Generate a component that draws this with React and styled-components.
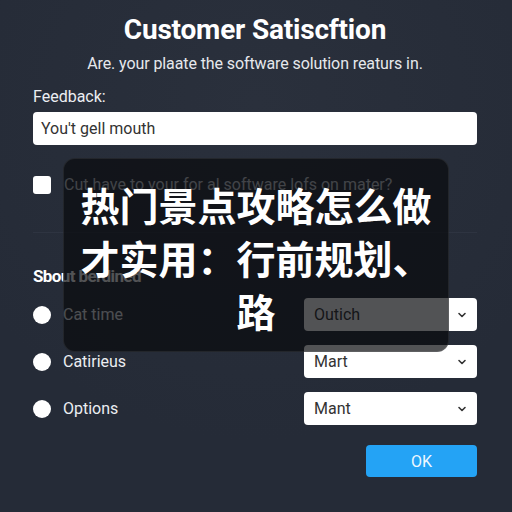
import React from 'react';
import styled, {createGlobalStyle} from 'styled-components';

const GlobalStyle = createGlobalStyle`
  body {
    margin: 0;
    background: #262c39;
    font-family: Roboto, "Noto Sans", sans-serif;
  }
`;

const Page = styled.div`
  position: relative;
  width: 512px;
  height: 512px;
  box-sizing: border-box;
  padding: 12px 35px 0 33px;
  background: radial-gradient(circle at 50% 20%, #2a303c 0%, #252b37 70%);
  color: #fff;
  overflow: hidden;
`;

const Title = styled.h1`
  margin: 0;
  text-align: center;
  font-size: 28px;
  font-weight: 700;
  line-height: 36px;
  letter-spacing: -0.2px;
`;

const Subtitle = styled.p`
  margin: 5px 0 0;
  text-align: center;
  font-size: 16px;
  line-height: 22px;
  color: #e6e8ec;
  letter-spacing: -0.1px;
`;

const Label = styled.div`
  margin-top: 11px;
  font-size: 16px;
  line-height: 22px;
  color: #eceef2;
`;

const TextInput = styled.div`
  margin-top: 4px;
  height: 33px;
  box-sizing: border-box;
  padding: 0 8px;
  display: flex;
  align-items: center;
  background: #fff;
  border-radius: 4px;
  font-size: 16px;
  color: #333;
`;

const CheckRow = styled.div`
  margin-top: 30px;
  display: flex;
  align-items: center;
  gap: 13px;
  font-size: 16px;
  color: #c8ccd4;
`;

const Box = styled.span`
  width: 18px;
  height: 18px;
  background: #fff;
  border-radius: 3px;
  flex-shrink: 0;
`;

const Divider = styled.hr`
  margin: 38px 0 0;
  border: none;
  border-top: 1px solid #2e3441;
`;

const Heading = styled.h2`
  margin: 32px 0 0;
  font-size: 17px;
  font-weight: 700;
  line-height: 22px;
  letter-spacing: -0.6px;
`;

const Rows = styled.div`
  margin-top: 11px;
  display: flex;
  flex-direction: column;
  gap: 14px;
`;

const Row = styled.div`
  display: flex;
  align-items: center;
  justify-content: space-between;
  height: 33px;
`;

const RadioLabel = styled.label`
  display: flex;
  align-items: center;
  gap: 12px;
  font-size: 16px;
  color: #eceef2;
`;

const Dot = styled.span`
  width: 18px;
  height: 18px;
  border-radius: 50%;
  background: #fff;
`;

const Select = styled.div`
  width: 173px;
  height: 33px;
  box-sizing: border-box;
  padding: 0 10px;
  display: flex;
  align-items: center;
  justify-content: space-between;
  background: #fff;
  border-radius: 4px;
  font-size: 16px;
  color: #333;
`;

const Footer = styled.div`
  margin-top: 20px;
  display: flex;
  justify-content: flex-end;
`;

const OkButton = styled.button`
  width: 111px;
  height: 32px;
  border: none;
  border-radius: 4px;
  background: #24a3f5;
  color: #eef8ff;
  font-family: Roboto, sans-serif;
  font-size: 16px;
`;

const Overlay = styled.div`
  position: absolute;
  left: 63px;
  top: 158px;
  width: 386px;
  height: 194px;
  box-sizing: border-box;
  padding: 19px 12px 0;
  border-radius: 12px;
  border: 1px solid rgba(255, 255, 255, 0.08);
  background: rgba(8, 10, 13, 0.7);
  text-align: center;
  font-family: "Noto Sans CJK SC", sans-serif;
  font-size: 39px;
  font-weight: 700;
  line-height: 53px;
  color: #fff;
`;

const Chevron = () => (
  <svg width="10" height="10" viewBox="0 0 10 10">
    <path d="M2 3.5 L5 6.5 L8 3.5" fill="none" stroke="#333" strokeWidth="1.6" strokeLinecap="round" strokeLinejoin="round" />
  </svg>
);

const options = [
  ['Cat time', 'Outich'],
  ['Catirieus', 'Mart'],
  ['Options', 'Mant'],
];

export default function App() {
  return (
    <Page>
      <GlobalStyle />
      <Title>Customer Satiscftion</Title>
      <Subtitle>Are. your plaate the software solution reaturs in.</Subtitle>
      <Label>Feedback:</Label>
      <TextInput>You't gell mouth</TextInput>
      <CheckRow>
        <Box />
        Cut have to your for al software lofs on mater?
      </CheckRow>
      <Divider />
      <Heading>Sbout berdined</Heading>
      <Rows>
        {options.map(([label, value]) => (
          <Row key={label}>
            <RadioLabel>
              <Dot />
              {label}
            </RadioLabel>
            <Select>
              {value}
              <Chevron />
            </Select>
          </Row>
        ))}
      </Rows>
      <Footer>
        <OkButton>OK</OkButton>
      </Footer>
      <Overlay>热门景点攻略怎么做才实用：行前规划、路</Overlay>
    </Page>
  );
}
